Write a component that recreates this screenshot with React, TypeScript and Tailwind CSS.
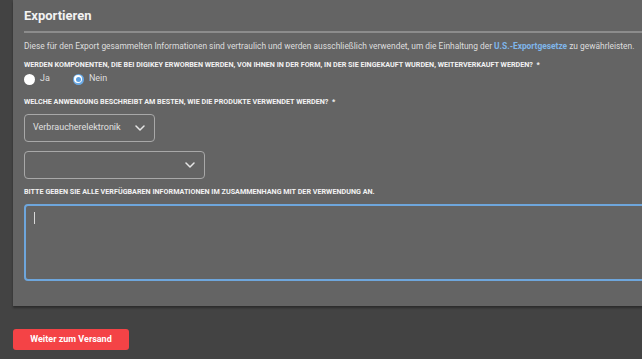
import React from "react";

function Chevron() {
  return (
    <svg width="10" height="6" viewBox="0 0 10 6" fill="none" className="shrink-0">
      <path d="M1 1l4 4 4-4" stroke="#e6e6e6" strokeWidth="1.5" strokeLinecap="round" strokeLinejoin="round" />
    </svg>
  );
}

export default function App() {
  return (
    <div className="w-[642px] h-[359px] overflow-hidden bg-[#434343] font-['Roboto',sans-serif]">
      <div className="ml-[13px] w-[660px] h-[306px] bg-[#646464] pl-[11px] pt-[7px] shadow-[0_2px_2px_rgba(0,0,0,0.35)]">
        <h1 className="text-[13px] leading-[18px] font-bold text-[#f2f2f2]">Exportieren</h1>
        <div className="mt-[6px] h-[2px] w-[640px] bg-[#8c8c8c]" />
        <p className="mt-[7px] text-[8.4px] leading-[12px] text-[#dedede] whitespace-nowrap">
          Diese für den Export gesammelten Informationen sind vertraulich und werden ausschließlich verwendet, um die Einhaltung der{" "}
          <span className="font-bold text-[#7fb6ea]">U.S.-Exportgesetze</span> zu gewährleisten.
        </p>
        <div className="mt-[8px] text-[7.2px] leading-[10px] font-bold text-[#f2f2f2] whitespace-nowrap">
          WERDEN KOMPONENTEN, DIE BEI DIGIKEY ERWORBEN WERDEN, VON IHNEN IN DER FORM, IN DER SIE EINGEKAUFT WURDEN, WEITERVERKAUFT WERDEN?&nbsp; *
        </div>
        <div className="mt-[3px] flex items-center h-[12px] text-[9px] text-[#dedede]">
          <span className="w-[11px] h-[11px] rounded-full bg-white" />
          <span className="ml-[5px]">Ja</span>
          <span className="ml-[23px] w-[11px] h-[11px] rounded-full bg-[#6aaae6] flex items-center justify-center">
            <span className="w-[8px] h-[8px] rounded-full bg-white flex items-center justify-center">
              <span className="w-[5px] h-[5px] rounded-full bg-[#5b9fe0]" />
            </span>
          </span>
          <span className="ml-[5px]">Nein</span>
        </div>
        <div className="mt-[12px] text-[7.2px] leading-[10px] font-bold text-[#f2f2f2] whitespace-nowrap">
          WELCHE ANWENDUNG BESCHREIBT AM BESTEN, WIE DIE PRODUKTE VERWENDET WERDEN?&nbsp; *
        </div>
        <div className="mt-[7px] w-[131px] h-[28px] rounded-[4px] border border-[#a8a8a8] flex items-center pl-[8px] pr-[9px]">
          <span className="text-[9px] text-[#e0e0e0]">Verbraucherelektronik</span>
          <span className="ml-auto">
            <Chevron />
          </span>
        </div>
        <div className="mt-[9px] w-[181px] h-[28px] rounded-[4px] border border-[#a8a8a8] flex items-center justify-end pr-[9px]">
          <Chevron />
        </div>
        <div className="mt-[8px] text-[7.2px] leading-[10px] font-bold text-[#f2f2f2] whitespace-nowrap">
          BITTE GEBEN SIE ALLE VERFÜGBAREN INFORMATIONEN IM ZUSAMMENHANG MIT DER VERWENDUNG AN.
        </div>
        <div className="mt-[7px] w-[640px] h-[77px] rounded-[4px] border-2 border-[#6ea6dc] pl-[8px] pt-[6px]">
          <div className="w-px h-[12px] bg-[#d8d8d8]" />
        </div>
      </div>
      <button className="ml-[13px] mt-[23px] w-[116px] h-[21px] rounded-[3px] bg-[#f44346] text-[9px] font-bold text-white flex items-center justify-center">
        Weiter zum Versand
      </button>
    </div>
  );
}
